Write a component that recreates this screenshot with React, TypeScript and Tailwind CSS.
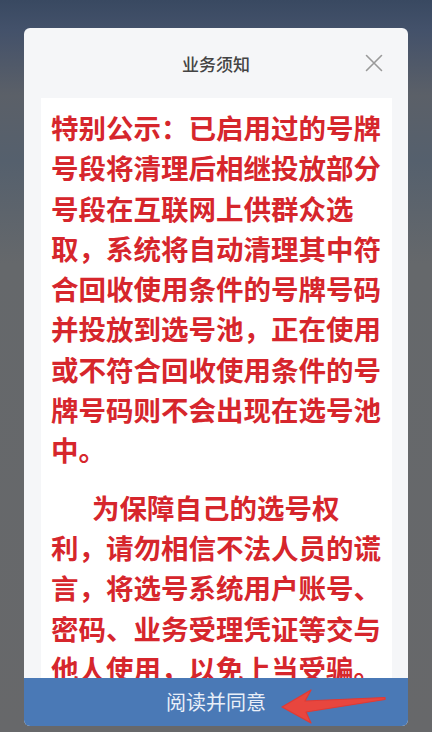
import React from "react";

const para1 = [
  "特别公示：已启用过的号牌",
  "号段将清理后相继投放部分",
  "号段在互联网上供群众选",
  "取，系统将自动清理其中符",
  "合回收使用条件的号牌号码",
  "并投放到选号池，正在使用",
  "或不符合回收使用条件的号",
  "牌号码则不会出现在选号池",
  "中。",
];

const para2 = [
  "为保障自己的选号权",
  "利，请勿相信不法人员的谎",
  "言，将选号系统用户账号、",
  "密码、业务受理凭证等交与",
  "他人使用，以免上当受骗。",
];

export default function App() {
  return (
    <div className="relative h-[732px] w-[432px] overflow-hidden bg-[linear-gradient(180deg,#394961_0%,#43516a_4%,#5b6068_13%,#55606d_22%,#65686b_36%,#67686a_100%)] font-['Noto_Sans_CJK_SC','Noto_Sans',sans-serif]">
      <div className="px-[24px] pt-[28px]">
        <div className="flex h-[698px] flex-col overflow-hidden rounded-[6px] bg-[#f5f6f8]">
          <div className="relative flex h-[70px] shrink-0 items-center justify-center">
            <span className="text-[17px] font-medium leading-none text-[#444]">业务须知</span>
            <button className="absolute right-[25px] top-[26px] flex h-[18px] w-[18px] items-center justify-center">
              <svg width="18" height="18" viewBox="0 0 18 18" fill="none">
                <path d="M1.5 1.5 L16.5 16.5 M16.5 1.5 L1.5 16.5" stroke="#9a9a9a" strokeWidth="1.6" strokeLinecap="round" />
              </svg>
            </button>
          </div>
          <div className="ml-[17px] mr-[16px] flex-1 overflow-hidden bg-white pl-[10px] pt-[9px] text-[27.5px] font-bold leading-[40.3px] text-[#d6262c]">
            <div>
              {para1.map((l) => (
                <div key={l} className="whitespace-nowrap">{l}</div>
              ))}
            </div>
            <div className="mt-[17px]">
              {para2.map((l, i) => (
                <div key={l} className={i === 0 ? "whitespace-nowrap pl-[41px]" : "whitespace-nowrap"}>
                  {l}
                </div>
              ))}
            </div>
          </div>
          <div className="relative flex h-[48px] shrink-0 items-center justify-center bg-[#4a79b6]">
            <span className="text-[20px] font-normal leading-none text-[#e9eff8]">阅读并同意</span>
            <svg
              className="absolute left-[252px] top-[8px]"
              width="112"
              height="40"
              viewBox="0 0 112 40"
            >
              <path
                d="M6 21 L35 4 L29 15 L109 11.5 L109 13.5 L30 26 L35 37 Z"
                fill="#e8463e"
                stroke="#e03a34"
                strokeWidth="1.2"
                strokeLinejoin="round"
              />
            </svg>
          </div>
        </div>
      </div>
    </div>
  );
}
